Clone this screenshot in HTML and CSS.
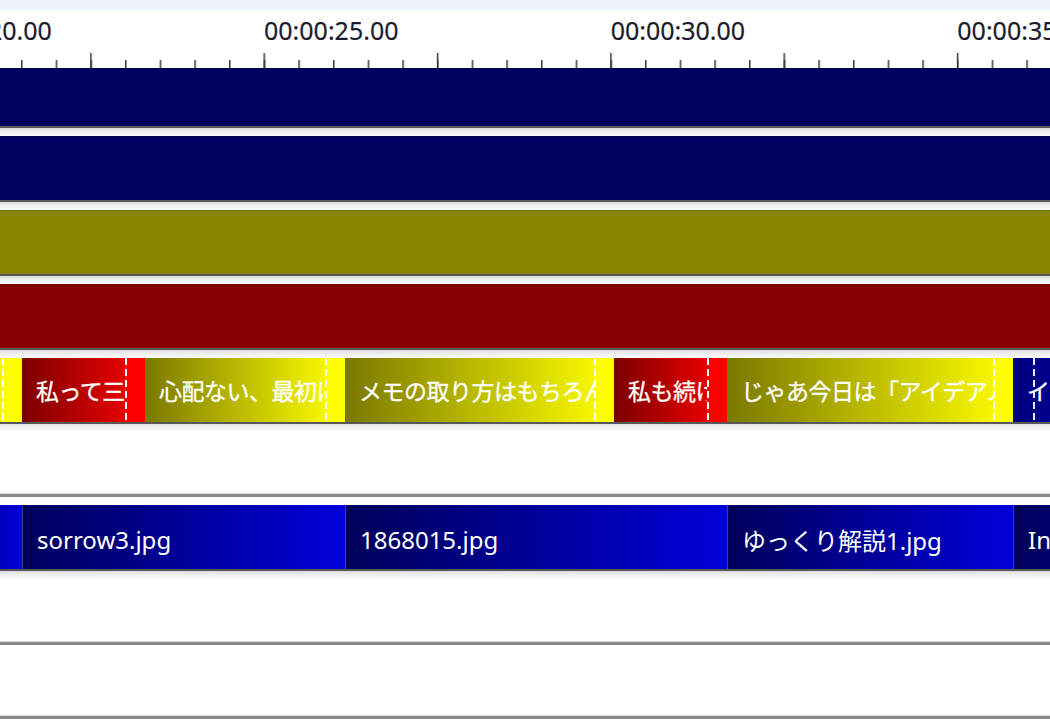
FILE: index.html
```html
<!DOCTYPE html>
<html lang="ja">
<head>
<meta charset="utf-8">
<title>タイムライン</title>
<link rel="stylesheet" href="styles.css">
</head>
<body>
<div class="timeline">
  <div class="topbar"></div>

  <div class="ruler">
    <div class="labels">
      <span class="label">00:00:20.00</span>
      <span class="label">00:00:25.00</span>
      <span class="label">00:00:30.00</span>
      <span class="label">00:00:35.00</span>
    </div>
    <svg class="ticks" width="1050" height="15" viewBox="0 0 1050 15">
      <defs>
        <pattern id="tick-minor" x="21" y="0" width="34.6667" height="15" patternUnits="userSpaceOnUse">
          <rect x="0" y="7" width="1.5" height="8" fill="#3a3a3a"/>
        </pattern>
        <pattern id="tick-major" x="90.1667" y="0" width="173.3333" height="15" patternUnits="userSpaceOnUse">
          <rect x="0" y="0" width="1.5" height="15" fill="#3a3a3a"/>
        </pattern>
      </defs>
      <rect width="1050" height="15" fill="url(#tick-minor)"/>
      <rect width="1050" height="15" fill="url(#tick-major)"/>
    </svg>
  </div>

  <div class="tracks">
    <div class="track first"><div class="lane fill navy"></div></div>
    <div class="track"><div class="lane fill navy"></div></div>
    <div class="track"><div class="lane fill olive"></div></div>
    <div class="track"><div class="lane fill maroon"></div></div>

    <!-- voice track -->
    <div class="track">
      <div class="lane clips voice">
        <div class="clip olive-clip" style="width:122px">
          <div class="body"></div>
          <div class="tail"></div>
        </div>
        <div class="clip red-clip" style="width:123px">
          <div class="body"><span>私って三日坊主なんだよね</span></div>
          <div class="tail"></div>
        </div>
        <div class="clip olive-clip" style="width:200px">
          <div class="body"><span>心配ない、最初は誰でもそうだよ</span></div>
          <div class="tail"></div>
        </div>
        <div class="clip olive-clip" style="width:269px">
          <div class="body"><span>メモの取り方はもちろん大事だけど</span></div>
          <div class="tail"></div>
        </div>
        <div class="clip red-clip" style="width:113px">
          <div class="body"><span>私も続けられるかな</span></div>
          <div class="tail"></div>
        </div>
        <div class="clip olive-clip" style="width:286px">
          <div class="body"><span>じゃあ今日は「アイデアノート」の話</span></div>
          <div class="tail"></div>
        </div>
        <div class="clip blue-clip" style="width:300px">
          <div class="body"><span>イメージしてみて</span></div>
        </div>
      </div>
    </div>

    <div class="track blank"><div class="lane empty"></div></div>

    <!-- image track -->
    <div class="track">
      <div class="lane clips images">
        <div class="clip img-clip" style="width:122px"><div class="body"></div></div>
        <div class="clip img-clip" style="width:323px"><div class="body"><span>sorrow3.jpg</span></div></div>
        <div class="clip img-clip" style="width:382px"><div class="body"><span>1868015.jpg</span></div></div>
        <div class="clip img-clip" style="width:286px"><div class="body"><span>ゆっくり解説1.jpg</span></div></div>
        <div class="clip img-clip" style="width:300px"><div class="body"><span>Insight.jpg</span></div></div>
      </div>
    </div>

    <div class="track blank"><div class="lane empty"></div></div>
    <div class="track blank"><div class="lane empty"></div></div>
  </div>
</div>
</body>
</html>
```

FILE: styles.css
```css
html, body {
  margin: 0;
  padding: 0;
  background: #ffffff;
}

body {
  width: 1050px;
  height: 720px;
  overflow: hidden;
  font-family: "Noto Sans", "Noto Sans CJK JP", sans-serif;
}

.timeline {
  display: flex;
  flex-direction: column;
  width: 1050px;
  overflow: hidden;
}

.topbar {
  height: 10px;
  background: #edf2fa;
  flex: none;
}

/* ruler with time labels and tick marks */
.ruler {
  height: 58px;
  flex: none;
  display: flex;
  flex-direction: column;
  justify-content: space-between;
  background: #ffffff;
  overflow: hidden;
}

.labels {
  display: flex;
  margin-left: -82.6667px;
  padding-top: 3px;
  height: 34px;
}

.label {
  flex: none;
  width: 346.6667px;
  font-size: 25px;
  line-height: 34px;
  color: #1c1c2c;
  white-space: nowrap;
  -webkit-text-stroke: 0.2px #1c1c2c;
}

.ticks {
  display: block;
  flex: none;
}

/* tracks */
.tracks {
  display: flex;
  flex-direction: column;
}

.track {
  flex: none;
  height: 73.85px;
  display: flex;
  flex-direction: column;
  background: linear-gradient(to bottom, #d9d9d9 0, #ececec 35%, #fbfbfb 100%) left bottom / 100% 8px no-repeat, #ffffff;
}

.track.first {
  height: 68px;
}

.track.blank {
  background: #ffffff;
}

.lane {
  flex: none;
  height: 66px;
  box-sizing: border-box;
  border-bottom: 2px solid #585858;
  overflow: hidden;
}

.track.first .lane {
  height: 60px;
}

.lane.fill {
  box-shadow: inset 0 1px 0 rgba(0, 0, 0, 0.18);
}

.navy { background: #00005f; }
.olive { background: #888600; }
.maroon { background: #880000; }

.lane.empty {
  background: #ffffff;
  border-bottom: 3px solid #8a8a8a;
  box-shadow: inset 0 -1px 0 #dcdcdc;
}

/* clip rows */
.clips {
  display: flex;
  margin-left: -100px;
  width: 1250px;
}

.clip {
  flex: none;
  display: flex;
  height: 100%;
  overflow: hidden;
  box-sizing: border-box;
}

.clip .body {
  flex: 1;
  min-width: 0;
  display: flex;
  align-items: center;
  padding-left: 14px;
  overflow: hidden;
  white-space: nowrap;
  text-overflow: clip;
  color: #ffffff;
}

.voice .body {
  font-size: 23px;
  letter-spacing: -0.5px;
  -webkit-text-stroke: 0.3px #ffffff;
}

.images .body {
  font-size: 24px;
  padding-top: 4px;
}

.clip .tail {
  flex: none;
  width: 20px;
}

.red-clip .body {
  background: linear-gradient(to right, #7c0000, #e60000);
}

.red-clip .tail {
  background: repeating-linear-gradient(to bottom, #ffffff 0 7px, transparent 7px 11px) left top / 2px 100% no-repeat, #ff0000;
}

.olive-clip .body {
  background: linear-gradient(to right, #7a7800, #f6f600);
}

.olive-clip .tail {
  background: repeating-linear-gradient(to bottom, #ffffff 0 7px, transparent 7px 11px) left top / 2px 100% no-repeat, #ffff00;
}

.blue-clip .body {
  background:
    repeating-linear-gradient(to bottom, #e8e8ff 0 7px, transparent 7px 11px) 20px top / 2px 100% no-repeat,
    linear-gradient(to right, #000080, #0000e0);
}

.img-clip {
  border-left: 1px solid #3c3c8c;
}

.img-clip .body {
  background: linear-gradient(to right, #00005a, #0000da);
}
```
